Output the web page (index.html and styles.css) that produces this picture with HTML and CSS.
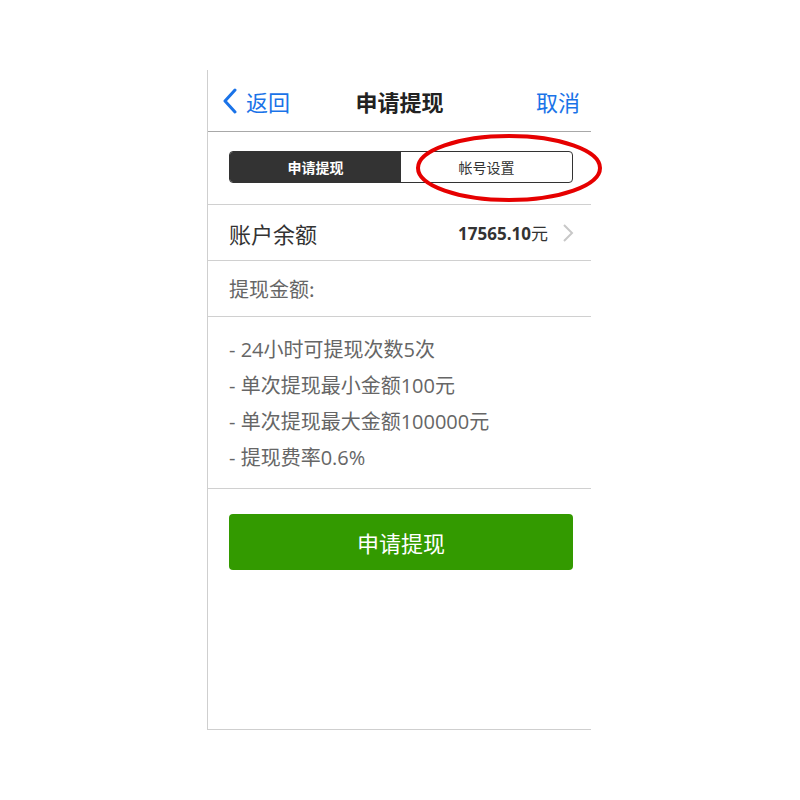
FILE: index.html
```html
<!DOCTYPE html>
<html lang="zh-CN">
<head>
<meta charset="utf-8">
<link rel="stylesheet" href="styles.css">
</head>
<body>
<div class="page">
  <div class="phone">
    <header class="nav">
      <a class="nav-back">
        <svg class="chev" width="16" height="26" viewBox="0 0 16 26"><path d="M13 2 L3 13 L13 24" fill="none" stroke="#1a73e8" stroke-width="3" stroke-linecap="round" stroke-linejoin="round"/></svg>
        <span>返回</span>
      </a>
      <h1 class="nav-title">申请提现</h1>
      <a class="nav-cancel">取消</a>
    </header>
    <section class="seg-wrap">
      <div class="seg">
        <div class="seg-item active">申请提现</div>
        <div class="seg-item">帐号设置</div>
        <svg class="ring" width="190" height="72" viewBox="0 0 190 72"><ellipse cx="95" cy="36" rx="91" ry="32" fill="none" stroke="#e60000" stroke-width="4"/></svg>
      </div>
    </section>
    <div class="row balance">
      <span class="label">账户余额</span>
      <span class="value"><b>17565.10</b>元</span>
      <svg class="arrow" width="12" height="20" viewBox="0 0 12 20"><path d="M2 2 L10 10 L2 18" fill="none" stroke="#c8c8c8" stroke-width="2"/></svg>
    </div>
    <div class="row amount">
      <span class="label-sm">提现金额:</span>
    </div>
    <ul class="rules">
      <li>- 24小时可提现次数5次</li>
      <li>- 单次提现最小金额100元</li>
      <li>- 单次提现最大金额100000元</li>
      <li>- 提现费率0.6%</li>
    </ul>
    <div class="btn-wrap">
      <button class="btn">申请提现</button>
    </div>
  </div>
</div>
</body>
</html>
```
FILE: styles.css
```css
html, body {
  margin: 0;
  padding: 0;
  background: #fff;
}
body {
  font-family: "Open Sans", "Noto Sans CJK SC", sans-serif;
  color: #333;
}
.page {
  padding: 70px 0 0 207px;
}
.phone {
  width: 383px;
  height: 659px;
  border-left: 1px solid #cfcfcf;
  border-bottom: 1px solid #cfcfcf;
  display: flex;
  flex-direction: column;
}
.nav {
  height: 61px;
  border-bottom: 1px solid #a8a8a8;
  display: flex;
  align-items: center;
  justify-content: space-between;
  padding: 0 11px 0 14px;
  position: relative;
}
.nav-back {
  display: flex;
  align-items: center;
  gap: 8px;
  color: #1a73e8;
  font-size: 22px;
  font-family: "Noto Sans CJK SC", sans-serif;
}
.nav-title {
  margin: 0;
  font-size: 22px;
  font-weight: bold;
  color: #222;
  font-family: "Noto Sans CJK SC", sans-serif;
  position: absolute;
  left: 0;
  right: 0;
  text-align: center;
  pointer-events: none;
}
.nav-cancel {
  color: #1a73e8;
  font-size: 22px;
  font-family: "Noto Sans CJK SC", sans-serif;
}
.seg-wrap {
  padding: 19px 18px 21px 21px;
  border-bottom: 1px solid #d0d0d0;
}
.seg {
  display: flex;
  height: 32px;
  border: 1px solid #333;
  border-radius: 4px;
  box-sizing: border-box;
  position: relative;
}
.seg-item {
  flex: 1;
  display: flex;
  align-items: center;
  justify-content: center;
  font-size: 14px;
  font-family: "Noto Sans CJK SC", sans-serif;
  color: #333;
}
.seg-item.active {
  background: #333;
  color: #fff;
  font-weight: bold;
  border-radius: 3px 0 0 3px;
}
.ring {
  position: absolute;
  left: 184px;
  top: -20px;
}
.row {
  height: 55px;
  border-bottom: 1px solid #d0d0d0;
  display: flex;
  align-items: center;
  padding: 0 17px 0 21px;
}
.label {
  font-size: 22px;
  font-family: "Noto Sans CJK SC", sans-serif;
  color: #333;
  flex: 1;
}
.value {
  font-size: 17px;
  color: #333;
  font-family: "Open Sans", "Noto Sans CJK SC", sans-serif;
}
.value b {
  font-weight: bold;
}
.arrow {
  margin-left: 14px;
}
.label-sm {
  font-size: 20px;
  color: #666;
  font-family: "Noto Sans CJK SC", sans-serif;
}
.rules {
  list-style: none;
  margin: 0;
  padding: 15px 21px 12px;
  border-bottom: 1px solid #d0d0d0;
}
.rules li {
  font-size: 20px;
  line-height: 36px;
  color: #666;
  font-family: "Open Sans", "Noto Sans CJK SC", sans-serif;
}
.btn-wrap {
  padding: 25px 18px 0 21px;
}
.btn {
  width: 100%;
  height: 56px;
  background: #339a00;
  border: none;
  border-radius: 4px;
  color: #fff;
  font-size: 22px;
  font-family: "Noto Sans CJK SC", sans-serif;
}
```
